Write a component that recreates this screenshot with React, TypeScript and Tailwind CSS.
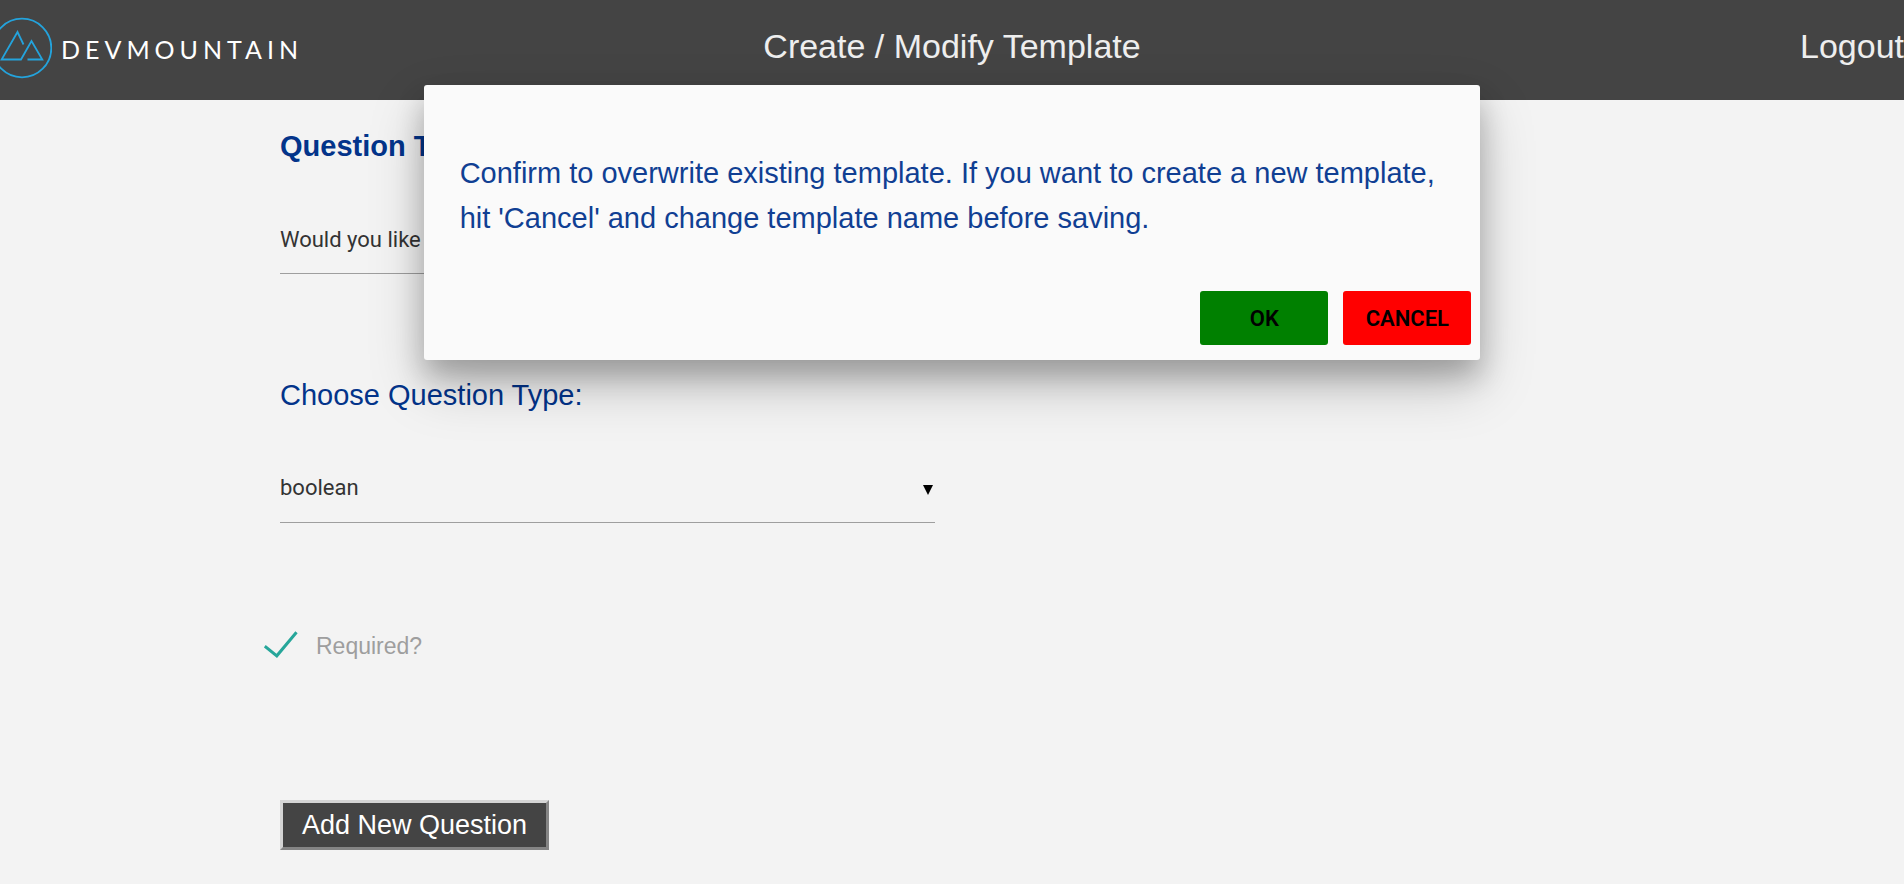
import { useState } from "react";

function Logo() {
  return (
    <a href="#home" aria-label="DevMountain" className="flex items-center gap-[9px] overflow-hidden text-white">
      <svg viewBox="0 0 52 62" className="h-[62px] w-[52px]" fill="none" stroke="#24a3dc" strokeWidth="1.8">
        <circle cx="22" cy="31" r="29.3" />
        <path d="M23.5 27.5 17.5 15 1.6 42.5H21L31.5 24 42.3 42.5H27.5" />
      </svg>
      <span className="pt-0.5 font-['Lato',sans-serif] text-[25px] leading-[60px] tracking-[0.2em]">DEVMOUNTAIN</span>
    </a>
  );
}

function Header() {
  return (
    <header className="grid h-[100px] grid-cols-3 items-start bg-[#444444] text-[34px] text-[#eeeeee]">
      <div className="pt-[17px]">
        <Logo />
      </div>
      <h1 className="pt-[21px] text-center leading-[50px]">Create / Modify Template</h1>
      <a href="#logout" className="justify-self-end pt-[21px] leading-[50px]">
        Logout
      </a>
    </header>
  );
}

function ConfirmDialog({ onClose }: { onClose: () => void }) {
  return (
    <div
      role="dialog"
      aria-modal="true"
      aria-labelledby="confirm-message"
      className="absolute inset-x-0 top-[85px] mx-auto w-[55.5%] rounded-[3px] bg-[#fafafa] shadow-[0_16px_28px_0_rgba(0,0,0,0.22),0_25px_55px_0_rgba(0,0,0,0.21)]"
    >
      <p id="confirm-message" className="px-9 pt-[66px] pb-8 text-[29px] leading-[45px] text-[#103f93]">
        Confirm to overwrite existing template. If you want to create a new template, hit 'Cancel' and change template
        name before saving.
      </p>
      <div className="flex justify-end gap-[15px] px-[9px] pt-[18px] pb-[15px] font-['Roboto',sans-serif] text-[22px] font-semibold text-black">
        <button type="button" onClick={onClose} className="h-[54px] w-32 rounded-[3px] bg-[#008000]">
          OK
        </button>
        <button type="button" onClick={onClose} className="h-[54px] w-32 rounded-[3px] bg-[#ff0000]">
          CANCEL
        </button>
      </div>
    </div>
  );
}

export default function App() {
  const [open, setOpen] = useState(true);
  const [title, setTitle] = useState("Would you like to attend?");
  const [kind, setKind] = useState("boolean");
  const [required, setRequired] = useState(true);

  return (
    <div className="relative min-h-screen bg-[#f3f3f3] font-['Liberation_Sans',Arial,sans-serif]">
      <Header />
      <main className="mx-auto max-w-[1344px] pb-[34px]">
        <form onSubmit={(e) => e.preventDefault()} className="flex w-[655px] max-w-full flex-col items-start">
          <label htmlFor="title" className="pt-6 text-[29px] leading-[44px] font-bold text-[#03348a]">
            Question Title:
          </label>
          <input
            id="title"
            value={title}
            onChange={(e) => setTitle(e.target.value)}
            className="mt-[38px] h-[68px] w-full border-b border-[#9e9e9e] bg-transparent font-['Roboto',sans-serif] text-[22px] text-[#333333] outline-none"
          />
          <label htmlFor="kind" className="pt-[99px] text-[29px] leading-[44px] text-[#03348a]">
            Choose Question Type:
          </label>
          <div className="mt-[38px] grid w-full items-center border-b border-[#9e9e9e]">
            <select
              id="kind"
              value={kind}
              onChange={(e) => setKind(e.target.value)}
              className="col-start-1 row-start-1 h-[67px] w-full appearance-none bg-transparent pb-0.5 font-['Roboto',sans-serif] text-[22px] text-[#333333] outline-none"
            >
              <option value="boolean">boolean</option>
              <option value="text">text</option>
            </select>
            <svg viewBox="0 0 10 12" className="pointer-events-none col-start-1 row-start-1 mr-0.5 h-3 w-2.5 justify-self-end">
              <path d="M0 2H10L5 12Z" fill="#000" />
            </svg>
          </div>
          <label className="mt-[100px] -ml-4 flex items-center gap-[18px] text-[23px] leading-[46px] text-[#9e9e9e]">
            <span className="grid pb-0.5">
              <input
                type="checkbox"
                checked={required}
                onChange={(e) => setRequired(e.target.checked)}
                className="col-start-1 row-start-1 h-7 w-[34px] appearance-none"
              />
              {required && (
                <svg
                  viewBox="0 0 34 28"
                  className="pointer-events-none col-start-1 row-start-1 h-7 w-[34px]"
                  fill="none"
                  stroke="#26a69a"
                  strokeWidth="3"
                >
                  <path d="M.8 15.2 12.8 24.8 32.5 1.2" />
                </svg>
              )}
            </span>
            Required?
          </label>
          <button
            type="submit"
            className="mt-[131px] h-[50px] border-3 border-t-[#d4d4d4] border-r-[#858585] border-b-[#858585] border-l-[#d4d4d4] bg-[#444444] px-[19px] text-[27px] leading-[44px] text-white"
          >
            Add New Question
          </button>
        </form>
      </main>
      {open && <ConfirmDialog onClose={() => setOpen(false)} />}
    </div>
  );
}
